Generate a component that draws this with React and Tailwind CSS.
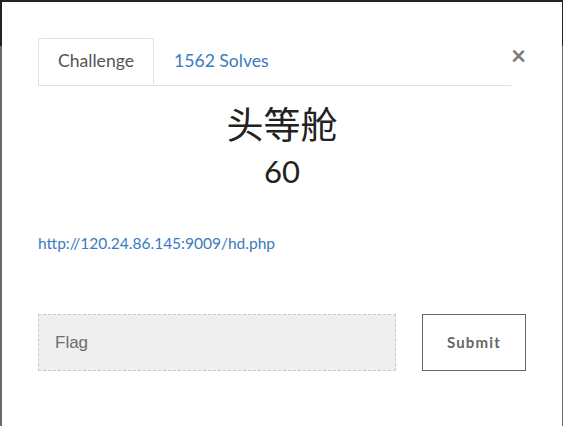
export default function App() {
  return (
    <div className="flex h-[426px] w-[563px] overflow-hidden bg-[#6a6a6a] font-['Lato','Noto_Sans_CJK_SC',sans-serif]">
      <div className="flex w-[2px] flex-col">
        <div className="h-[46px] bg-[#1f2326]" />
        <div className="flex-1 bg-[#6a6a6a]" />
      </div>

      <div className="flex flex-1 flex-col">
        <div className="h-[2px] bg-[#1f2326]" />
        <div className="flex-1 bg-white px-[36px] pt-[36px]">
          {/* tabs */}
          <div className="flex items-start">
            <ul className="flex flex-1 border-b border-[#dde2e8] text-[17.6px]">
              <li className="-mb-px flex h-[47px] items-center rounded-t-[4px] border border-b-white border-[#dde2e8] px-[19px] text-[#555]">
                Challenge
              </li>
              <li className="flex h-[47px] items-center px-[20px] text-[#3a7bbf]">
                1562 Solves
              </li>
            </ul>
            <button className="mt-[2px] flex h-[30px] w-[15px] items-center justify-end text-[26px] font-bold leading-none text-[#7a7a7a]">
              ×
            </button>
          </div>

          {/* body */}
          <div className="text-center text-[#222]">
            <h3 className="mt-[18px] text-[37px] leading-[41px]">头等舱</h3>
            <h4 className="mt-[9px] text-[31px] leading-[34px]">60</h4>
          </div>

          <div className="mt-[45px] text-[15.5px] leading-[20px] text-[#3a7bbf]">
            http://120.24.86.145:9009/hd.php
          </div>

          <div className="mt-[61px] flex gap-[26px]">
            <div className="flex h-[57px] w-[358px] items-center border border-dashed border-[#c2ccd6] bg-[#efefef] pl-[16px] font-['Liberation_Sans',sans-serif] text-[17px] text-[#6d6d6d]">
              Flag
            </div>
            <button className="flex h-[57px] w-[104px] items-center justify-center border border-[#666] bg-white text-[15px] font-bold tracking-[1.2px] text-[#666]">
              Submit
            </button>
          </div>
        </div>
      </div>

      <div className="flex w-[1px] flex-col">
        <div className="h-[46px] bg-[#1f2326]" />
        <div className="flex-1 bg-[#6a6a6a]" />
      </div>
    </div>
  )
}
